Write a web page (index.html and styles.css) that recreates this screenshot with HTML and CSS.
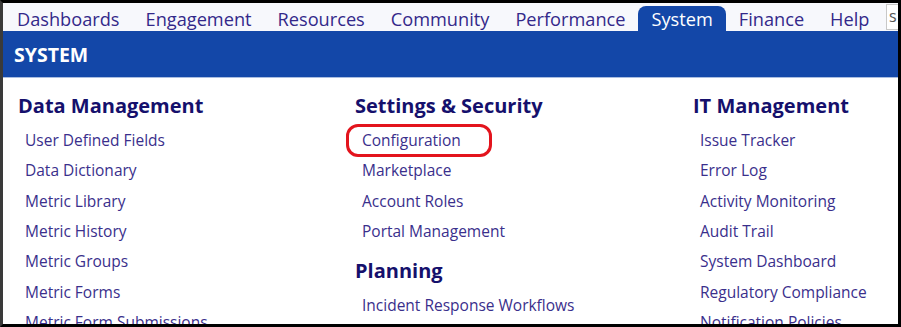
FILE: index.html
```html
<!DOCTYPE html>
<html>
<head>
    <link rel="stylesheet" href="styles.css">
</head>
<body>
    <div class="frame">
        <div class="topnav">
            <a class="tab">Dashboards</a>
            <a class="tab">Engagement</a>
            <a class="tab">Resources</a>
            <a class="tab">Community</a>
            <a class="tab">Performance</a>
            <a class="tab active">System</a>
            <a class="tab">Finance</a>
            <a class="tab">Help</a>
            <div class="search">s</div>
        </div>
        <div class="band">SYSTEM</div>
        <div class="menu">
            <div class="col">
                <h3>Data Management</h3>
                <a class="item">User Defined Fields</a>
                <a class="item">Data Dictionary</a>
                <a class="item">Metric Library</a>
                <a class="item">Metric History</a>
                <a class="item">Metric Groups</a>
                <a class="item">Metric Forms</a>
                <a class="item">Metric Form Submissions</a>
            </div>
            <div class="col">
                <h3>Settings &amp; Security</h3>
                <a class="item circled">Configuration</a>
                <a class="item">Marketplace</a>
                <a class="item">Account Roles</a>
                <a class="item">Portal Management</a>
                <h3 class="next">Planning</h3>
                <a class="item">Incident Response Workflows</a>
            </div>
            <div class="col">
                <h3>IT Management</h3>
                <a class="item">Issue Tracker</a>
                <a class="item">Error Log</a>
                <a class="item">Activity Monitoring</a>
                <a class="item">Audit Trail</a>
                <a class="item">System Dashboard</a>
                <a class="item">Regulatory Compliance</a>
                <a class="item">Notification Policies</a>
            </div>
        </div>
    </div>
</body>
</html>
```

FILE: styles.css
```css
body {
    margin: 0;
    background: #000;
    font-family: "Open Sans", "Noto Sans", sans-serif;
}
.frame {
    box-sizing: border-box;
    width: 901px;
    height: 327px;
    border: 3px solid #000;
    border-left: 3px solid #3a3a3a;
    background: #fff;
    overflow: hidden;
}
.topnav {
    display: flex;
    align-items: flex-end;
    height: 28px;
    padding-left: 1px;
    background: #f7f8fc;
}
.tab {
    flex-shrink: 0;
    padding: 0 13px;
    height: 25px;
    line-height: 26px;
    font-size: 18.2px;
    color: #33288a;
    white-space: nowrap;
}
.tab.active {
    background: #1347a8;
    color: #fff;
    border-radius: 8px 8px 0 0;
}
.search {
    margin-left: auto;
    align-self: center;
    flex-shrink: 0;
    width: 12px;
    height: 26px;
    box-sizing: border-box;
    border: 1px solid #c8c8c8;
    border-right: none;
    background: #fff;
    font-size: 16px;
    line-height: 22px;
    padding-left: 2px;
    color: #555;
    overflow: hidden;
}
.band {
    height: 47px;
    background: #1347a8;
    color: #fff;
    font-weight: 700;
    font-size: 19.5px;
    line-height: 48px;
    padding-left: 11px;
    border-bottom: 1px solid #a9bde0;
    box-sizing: border-box;
}
.menu {
    display: grid;
    grid-template-columns: 337px 338px 1fr;
    padding: 14px 0 0 15px;
}
.col {
    display: flex;
    flex-direction: column;
}
.col h3 {
    margin: 0 0 5px;
    font-size: 20px;
    line-height: 28px;
    color: #15106c;
    white-space: nowrap;
}
.col h3.next {
    margin-top: 11px;
}
.item {
    display: block;
    align-self: flex-start;
    height: 30.33px;
    line-height: 30px;
    padding-left: 7px;
    font-size: 15.5px;
    color: #3a2f8c;
    white-space: nowrap;
}
.circled {
    position: relative;
}
.circled::after {
    content: "";
    position: absolute;
    left: -9px;
    top: -1px;
    width: 140px;
    height: 27px;
    border: 3px solid #e3141d;
    border-radius: 12px;
}
```
